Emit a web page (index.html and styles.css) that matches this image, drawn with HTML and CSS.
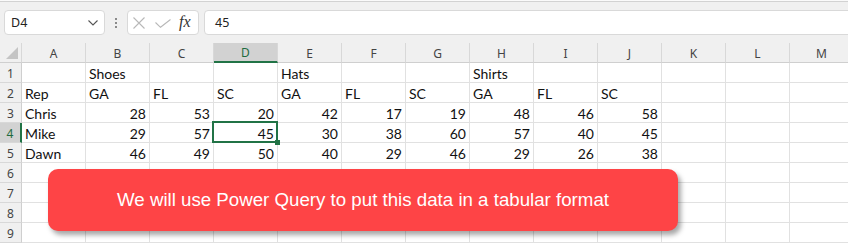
FILE: index.html
```html
<!DOCTYPE html>
<html>
<head>
<meta charset="utf-8">
<link rel="stylesheet" href="styles.css">
</head>
<body>
<div class="app">
  <div class="topstrip"><div class="topbox"></div></div>
  <div class="fbar">
    <div class="namebox"><span>D4</span>
      <svg class="chev" width="10" height="6" viewBox="0 0 10 6"><polyline points="0.5,0.5 5,5 9.5,0.5" fill="none" stroke="#555" stroke-width="1.1"/></svg>
    </div>
    <div class="dots"><span></span><span></span><span></span></div>
    <div class="fxbox">
      <svg width="12" height="12" viewBox="0 0 12 12"><path d="M0.5 0.5 L11.5 11.5 M11.5 0.5 L0.5 11.5" stroke="#b8b8b8" stroke-width="1.1" fill="none"/></svg>
      <svg width="16" height="9" viewBox="0 0 16 9"><polyline points="0.5,3.5 5.5,8.3 15.5,0.5" stroke="#b8b8b8" stroke-width="1.1" fill="none"/></svg>
      <span class="fx">fx</span>
    </div>
    <div class="finput">45</div>
  </div>
  <div class="sheet">
    <div class="hd corner"><svg width="12" height="12" viewBox="0 0 12 12"><polygon points="0,12 12,12 12,0" fill="#c4c4c4"/></svg></div>
    <div class="hd">A</div><div class="hd">B</div><div class="hd">C</div><div class="hd sel-col">D</div><div class="hd">E</div><div class="hd">F</div><div class="hd">G</div><div class="hd">H</div><div class="hd">I</div><div class="hd">J</div><div class="hd">K</div><div class="hd">L</div><div class="hd">M</div>

    <div class="rh">1</div>
    <div class="c"></div><div class="c">Shoes</div><div class="c"></div><div class="c"></div><div class="c">Hats</div><div class="c"></div><div class="c"></div><div class="c">Shirts</div><div class="c"></div><div class="c"></div><div class="c"></div><div class="c"></div><div class="c"></div>

    <div class="rh">2</div>
    <div class="c">Rep</div><div class="c">GA</div><div class="c">FL</div><div class="c">SC</div><div class="c">GA</div><div class="c">FL</div><div class="c">SC</div><div class="c">GA</div><div class="c">FL</div><div class="c">SC</div><div class="c"></div><div class="c"></div><div class="c"></div>

    <div class="rh">3</div>
    <div class="c">Chris</div><div class="c n">28</div><div class="c n">53</div><div class="c n">20</div><div class="c n">42</div><div class="c n">17</div><div class="c n">19</div><div class="c n">48</div><div class="c n">46</div><div class="c n">58</div><div class="c"></div><div class="c"></div><div class="c"></div>

    <div class="rh sel-row">4</div>
    <div class="c">Mike</div><div class="c n">29</div><div class="c n">57</div><div class="c n active">45</div><div class="c n">30</div><div class="c n">38</div><div class="c n">60</div><div class="c n">57</div><div class="c n">40</div><div class="c n">45</div><div class="c"></div><div class="c"></div><div class="c"></div>

    <div class="rh">5</div>
    <div class="c">Dawn</div><div class="c n">46</div><div class="c n">49</div><div class="c n">50</div><div class="c n">40</div><div class="c n">29</div><div class="c n">46</div><div class="c n">29</div><div class="c n">26</div><div class="c n">38</div><div class="c"></div><div class="c"></div><div class="c"></div>

    <div class="rh">6</div>
    <div class="c"></div><div class="c"></div><div class="c"></div><div class="c"></div><div class="c"></div><div class="c"></div><div class="c"></div><div class="c"></div><div class="c"></div><div class="c"></div><div class="c"></div><div class="c"></div><div class="c"></div>
    <div class="rh">7</div>
    <div class="c"></div><div class="c"></div><div class="c"></div><div class="c"></div><div class="c"></div><div class="c"></div><div class="c"></div><div class="c"></div><div class="c"></div><div class="c"></div><div class="c"></div><div class="c"></div><div class="c"></div>
    <div class="rh">8</div>
    <div class="c"></div><div class="c"></div><div class="c"></div><div class="c"></div><div class="c"></div><div class="c"></div><div class="c"></div><div class="c"></div><div class="c"></div><div class="c"></div><div class="c"></div><div class="c"></div><div class="c"></div>
    <div class="rh">9</div>
    <div class="c"></div><div class="c"></div><div class="c"></div><div class="c"></div><div class="c"></div><div class="c"></div><div class="c"></div><div class="c"></div><div class="c"></div><div class="c"></div><div class="c"></div><div class="c"></div><div class="c"></div>
  </div>
  <div class="banner">We will use Power Query to put this data in a tabular format</div>
</div>
</body>
</html>
```
FILE: styles.css
```css
* { box-sizing: border-box; }
html, body { margin: 0; padding: 0; }
body { width: 848px; height: 243px; overflow: hidden; background: #f0f0f0; }
.app { position: relative; width: 848px; height: 243px; overflow: hidden; background: #f0f0f0; }

.topstrip { height: 10px; }
.topbox { height: 2px; width: 100%; border-bottom: 1px solid #d2d2d2; background: #fafafa; }

.fbar { height: 25px; display: flex; align-items: stretch; padding-left: 4px; }
.namebox {
  width: 101px; background: #fff; border: 1px solid #d9d9d9; border-radius: 4px;
  display: flex; align-items: center; justify-content: space-between;
  padding: 0 6px 0 6px;
  font-family: "Noto Sans", sans-serif; font-size: 12.5px; color: #222;
}
.chev { margin-top: 1px; }
.dots { width: 22px; display: flex; flex-direction: column; align-items: center; justify-content: center; gap: 2px; }
.dots span { width: 2px; height: 2px; background: #8a8a8a; display: block; }
.fxbox {
  width: 72px; background: #fff; border: 1px solid #d9d9d9; border-radius: 4px;
  display: flex; align-items: center; padding-left: 5px; gap: 9px;
}
.fxbox svg:nth-child(2) { margin-left: 1px; margin-top: 1px; }
.fx { font-family: "Liberation Serif", serif; font-style: italic; font-size: 16px; color: #333; margin-left: -1px; margin-top: -2px; }
.finput {
  flex: 1; margin-left: 5px; margin-right: -6px; background: #fff; border: 1px solid #d9d9d9; border-radius: 4px;
  display: flex; align-items: center; padding-left: 10px;
  font-family: "Noto Sans", sans-serif; font-size: 12.5px; color: #222;
}

.sheet {
  margin-top: 8px;
  display: grid;
  grid-template-columns: 22px repeat(13, 64px);
  grid-auto-rows: 20px;
  width: 854px;
}
.hd {
  background: #f0f0f0; border-right: 1px solid #d8d8d8; border-bottom: 1px solid #cfcfcf;
  display: flex; align-items: center; justify-content: center;
  font-family: "Noto Sans", sans-serif; font-size: 12px; color: #444; padding-top: 1px;
}
.corner { align-items: flex-end; justify-content: flex-end; padding: 0 3px 3px 0; }
.sel-col { background: #d2d2d2; border-bottom: 2px solid #217346; color: #1e6b40; }
.rh {
  background: #f0f0f0; border-right: 1px solid #cfcfcf; border-bottom: 1px solid #d8d8d8;
  display: flex; align-items: center; justify-content: center;
  font-family: "Noto Sans", sans-serif; font-size: 12px; color: #444; padding-top: 1px;
}
.sel-row { background: #d2d2d2; border-right: 2px solid #217346; color: #1e6b40; }
.c {
  background: #fff; border-right: 1px solid #e1e1e1; border-bottom: 1px solid #e1e1e1;
  font-family: Lato, "Liberation Sans", sans-serif; font-size: 14px; line-height: 19px; color: #111;
  padding: 1px 3px 0 3px; white-space: nowrap;
}
.n { text-align: right; padding-right: 3px; }
.active { position: relative; }
.active::after {
  content: ""; position: absolute; left: -2px; top: -2px; right: -1px; bottom: -1px;
  border: 2px solid #217346;
}
.active::before {
  content: ""; position: absolute; right: -3px; bottom: -3px; width: 5px; height: 5px;
  background: #217346; z-index: 2;
}

.banner {
  position: absolute; left: 48px; top: 169px; width: 630px; height: 62px;
  background: #fe4446; border-radius: 10px;
  box-shadow: 3px 4px 5px rgba(0,0,0,0.35);
  display: flex; align-items: center; justify-content: center;
  font-family: "Liberation Sans", Arial, sans-serif; font-size: 18.7px; color: #fff;
}
```
